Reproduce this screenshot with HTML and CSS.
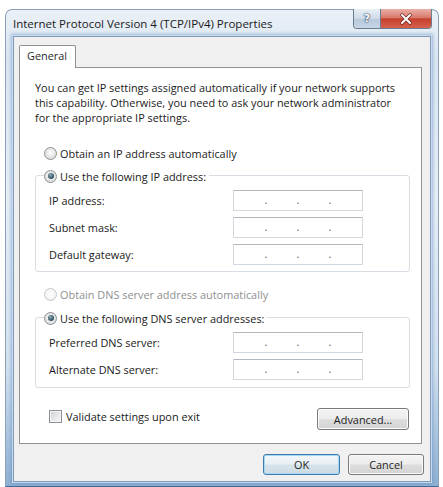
FILE: index.html
```html
<!DOCTYPE html>
<html lang="en">
<head>
<meta charset="utf-8">
<title>Internet Protocol Version 4 (TCP/IPv4) Properties</title>
<link rel="stylesheet" href="styles.css">
</head>
<body>
<div class="window">
  <div class="titlebar">
    <div class="title">Internet Protocol Version 4 (TCP/IPv4) Properties</div>
    <div class="caption-btns">
      <div class="cbtn help"><span class="help-glyph">?</span></div>
      <div class="cbtn close">
        <svg width="14" height="12" viewBox="0 0 14 12" aria-hidden="true">
          <path d="M3 2 L11 10 M11 2 L3 10" stroke="#6b2a25" stroke-width="3.4" stroke-linecap="round" fill="none"/>
          <path d="M3 2 L11 10 M11 2 L3 10" stroke="#ffffff" stroke-width="2" stroke-linecap="round" fill="none"/>
        </svg>
      </div>
    </div>
  </div>
  <div class="client">
    <div class="tabs"><div class="tab">General</div></div>
    <div class="panel">
      <p class="intro">You can get IP settings assigned automatically if your network supports<br>this capability. Otherwise, you need to ask your network administrator<br>for the appropriate IP settings.</p>

      <div class="opt first-opt"><span class="radio"></span><span>Obtain an IP address automatically</span></div>
      <div class="group group-ip">
        <div class="legend"><span class="radio checked"></span><span>Use the following IP address:</span></div>
        <div class="field"><span class="flabel">IP address:</span><div class="ip"><span class="seg"></span><span class="dot">.</span><span class="seg"></span><span class="dot">.</span><span class="seg"></span><span class="dot">.</span><span class="seg"></span></div></div>
        <div class="field"><span class="flabel">Subnet mask:</span><div class="ip"><span class="seg"></span><span class="dot">.</span><span class="seg"></span><span class="dot">.</span><span class="seg"></span><span class="dot">.</span><span class="seg"></span></div></div>
        <div class="field"><span class="flabel">Default gateway:</span><div class="ip"><span class="seg"></span><span class="dot">.</span><span class="seg"></span><span class="dot">.</span><span class="seg"></span><span class="dot">.</span><span class="seg"></span></div></div>
      </div>

      <div class="opt dns-opt disabled"><span class="radio"></span><span>Obtain DNS server address automatically</span></div>
      <div class="group group-dns">
        <div class="legend"><span class="radio checked"></span><span>Use the following DNS server addresses:</span></div>
        <div class="field"><span class="flabel">Preferred DNS server:</span><div class="ip"><span class="seg"></span><span class="dot">.</span><span class="seg"></span><span class="dot">.</span><span class="seg"></span><span class="dot">.</span><span class="seg"></span></div></div>
        <div class="field"><span class="flabel">Alternate DNS server:</span><div class="ip"><span class="seg"></span><span class="dot">.</span><span class="seg"></span><span class="dot">.</span><span class="seg"></span><span class="dot">.</span><span class="seg"></span></div></div>
      </div>

      <div class="bottom-row">
        <div class="check-row"><span class="checkbox"></span><span>Validate settings upon exit</span></div>
        <button class="btn advanced">Advanced...</button>
      </div>
    </div>
    <div class="dlg-btns">
      <button class="btn default">OK</button>
      <button class="btn">Cancel</button>
    </div>
  </div>
</div>
</body>
</html>
```

FILE: styles.css
```css
html, body {
  margin: 0;
  height: 100%;
  overflow: hidden;
  background: #ffffff;
}

body {
  font-family: "Open Sans", "Noto Sans", sans-serif;
  font-size: 10.9px;
  color: #1a1a1a;
}

.window {
  box-sizing: border-box;
  width: 434px;
  height: 478px;
  margin: 9px 0 0 5px;
  border: 1px solid #8aa1b9;
  border-bottom-color: #3f6a95;
  border-radius: 7px 7px 0 0;
  background: linear-gradient(180deg, #eaf0f7 0%, #dbe6f1 10%, #e6eef6 40%, #d3e1ef 75%, #8fb0d2 100%);
  padding-bottom: 4px;
}

.titlebar {
  height: 26px;
  display: flex;
  justify-content: space-between;
  padding-left: 7px;
  padding-right: 6px;
}

.title {
  padding-top: 6px;
  line-height: 16px;
  font-size: 11.5px;
  color: #1a1a1a;
  white-space: nowrap;
}

.caption-btns {
  display: flex;
  align-self: flex-start;
  margin-top: -1px;
  height: 19px;
  border: 1px solid #6a7c90;
  border-top: none;
  border-radius: 0 0 4px 4px;
  overflow: hidden;
}

.cbtn {
  display: flex;
  align-items: center;
  justify-content: center;
}

.help {
  width: 26px;
  background: linear-gradient(180deg, #e9eff6 0%, #cfdbe8 50%, #b7c8da 51%, #c6d6e7 100%);
  border-right: 1px solid #6a7c90;
}

.help-glyph {
  font-family: "DejaVu Sans", sans-serif;
  font-weight: bold;
  font-size: 11px;
  color: #ffffff;
  text-shadow: 0 0 1px #344a60, 0 0 1px #344a60, 0 0 2px #344a60;
}

.close {
  width: 50px;
  background: linear-gradient(180deg, #eab0a6 0%, #d97a6d 45%, #c7402f 52%, #d5604c 100%);
}

.client {
  box-sizing: border-box;
  height: 446px;
  margin: 0 7px;
  border: 1px solid #7f9ab7;
  background: #f0f0f0;
  padding: 8px 8px 0 5px;
  box-shadow: 0 0 0 1px #c9dbee, 0 0 3px 2px rgba(96, 138, 192, 0.55);
}

.tabs {
  height: 22px;
  display: flex;
}

.tab {
  position: relative;
  z-index: 1;
  box-sizing: border-box;
  width: 57px;
  height: 23px;
  border: 1px solid #8e9297;
  border-bottom: none;
  border-radius: 2px 2px 0 0;
  background: #ffffff;
  padding: 2px 0 0 7px;
  line-height: 16px;
  color: #2a2a2a;
}

.panel {
  box-sizing: border-box;
  height: 377px;
  border: 1px solid #8e9297;
  background: #ffffff;
  padding: 0 11px 0 15px;
}

.intro {
  margin: 12px 0 0;
  line-height: 15px;
  white-space: nowrap;
}

.opt {
  display: flex;
  align-items: center;
  gap: 3px;
  height: 16px;
  margin-left: 9px;
  white-space: nowrap;
}

.first-opt {
  margin-top: 20px;
}

.dns-opt {
  margin-top: 14px;
}

.disabled {
  color: #8f8f8f;
}

.radio {
  box-sizing: border-box;
  width: 13px;
  height: 13px;
  flex: none;
  border-radius: 50%;
  border: 1px solid #8c8f94;
  background: radial-gradient(circle at 50% 45%, #ffffff 0%, #ececec 40%, #cfd0d2 100%);
  display: flex;
  align-items: center;
  justify-content: center;
}

.disabled .radio {
  border-color: #c6c8cb;
  background: radial-gradient(circle at 50% 45%, #ffffff 0%, #f6f6f6 50%, #e4e5e6 100%);
}

.radio.checked::after {
  content: "";
  width: 6px;
  height: 6px;
  border-radius: 50%;
  background: radial-gradient(circle at 40% 35%, #8fb0b8 0%, #3e5f6b 55%, #1e3a46 100%);
}

.group {
  box-sizing: border-box;
  width: 375px;
  border: 1px solid #d7dde2;
  border-radius: 3px;
  padding: 0 0 6px 13px;
}

.group-ip {
  margin-top: 14px;
}

.group-dns {
  margin-top: 15px;
  padding-bottom: 7px;
}

.legend {
  display: flex;
  align-items: center;
  gap: 3px;
  width: max-content;
  height: 16px;
  margin: -8px 0 0 -5px;
  padding-right: 3px;
  background: #ffffff;
  white-space: nowrap;
}

.field {
  display: flex;
  align-items: center;
  height: 21px;
  margin-top: 6px;
}

.flabel {
  width: 184px;
  flex: none;
  white-space: nowrap;
}

.ip {
  box-sizing: border-box;
  width: 130px;
  height: 21px;
  display: flex;
  align-items: center;
  border: 1px solid #d3d8dd;
  border-top-color: #b3b8be;
  background: #ffffff;
}

.seg {
  flex: 1;
}

.dot {
  width: 0;
  display: flex;
  justify-content: center;
  color: #555555;
  line-height: 1;
  padding-bottom: 1px;
}

.bottom-row {
  display: flex;
  justify-content: space-between;
  align-items: flex-start;
  margin-top: 20px;
}

.check-row {
  display: flex;
  align-items: center;
  gap: 4px;
  height: 15px;
  margin: 1px 0 0 14px;
  white-space: nowrap;
}

.checkbox {
  box-sizing: border-box;
  width: 13px;
  height: 13px;
  flex: none;
  border: 1px solid #8e9196;
  background: linear-gradient(135deg, #cdd0d4 0%, #e9eaeb 60%, #f6f6f6 100%);
  box-shadow: inset 0 0 0 1px #f4f4f4;
}

.btn {
  box-sizing: border-box;
  font-family: inherit;
  font-size: inherit;
  color: #1f1f1f;
  height: 22px;
  padding: 0;
  border: 1px solid #7a7a7a;
  border-radius: 3px;
  background: linear-gradient(180deg, #f4f4f4 0%, #ececec 48%, #dedede 52%, #d3d3d3 100%);
  box-shadow: inset 0 0 0 1px #fbfbfb;
}

.advanced {
  width: 92px;
  margin-right: 1px;
}

.dlg-btns {
  display: flex;
  justify-content: flex-end;
  gap: 8px;
  margin-top: 10px;
}

.dlg-btns .btn {
  width: 77px;
  height: 21px;
}

.dlg-btns .btn:last-child {
  width: 76px;
  margin-right: -2px;
}

.btn.default {
  border-color: #3d7bad;
  box-shadow: inset 0 0 0 1px #a6d8f4;
  background: linear-gradient(180deg, #f2f7fa 0%, #e8eff4 48%, #d7e3ea 52%, #cddbe3 100%);
}
```
